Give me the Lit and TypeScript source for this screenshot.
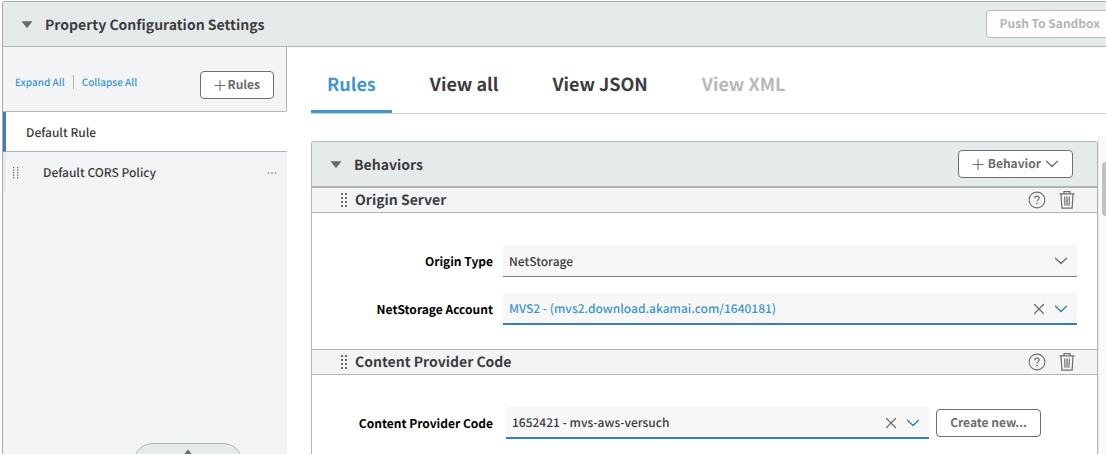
import { LitElement, html, css, svg } from "lit";
import { customElement, property, state } from "lit/decorators.js";
import { classMap } from "lit/directives/class-map.js";

const controls = css`
  * { box-sizing: border-box; }
  button, select {
    font: inherit;
    color: inherit;
    margin: 0;
    text-rendering: inherit;
  }
  .btn {
    display: inline-flex;
    align-items: center;
    justify-content: center;
    height: 28px;
    padding: 0 13px;
    border: 1px solid #6e6e6e;
    border-radius: 4px;
    background: #fff;
    color: #6e6e6e;
    font-size: 12px;
    line-height: 20px;
    font-weight: 700;
    white-space: nowrap;
    flex: none;
    cursor: pointer;
  }
  .btn:disabled { border-color: #b9bcbc; color: #b5b5b5; cursor: default; }
  .icon-btn {
    display: inline-flex;
    padding: 0;
    border: 0;
    background: none;
    color: #6e6e6e;
    cursor: pointer;
  }
  svg { display: block; flex: none; }
`;

const caret = svg`<svg width="12" height="7" viewBox="0 0 12 7" aria-hidden="true"><path d="M0.5 0.3h11L6.6 6.4q-.6.6-1.2 0z" fill="#6a6a6a"/></svg>`;
const plus = svg`<svg width="12" height="12" viewBox="0 0 12 12" aria-hidden="true"><path d="M6 1.500v10M1 6.500h10" stroke="currentColor" stroke-width="1.100" stroke-linecap="round"/></svg>`;
const chevron = svg`<svg width="14" height="10" viewBox="0 0 14 10" aria-hidden="true"><path d="M1.5 2.2 7 7.6l5.500-5.400" fill="none" stroke="currentColor" stroke-width="1.4" stroke-linecap="round" stroke-linejoin="round"/></svg>`;
const cross = svg`<svg width="12" height="12" viewBox="0 0 12 12" aria-hidden="true"><path d="M1.500 1.500l9 9M10.500 1.500l-9 9" stroke="currentColor" stroke-width="1.2" stroke-linecap="round"/></svg>`;
const help = svg`<svg width="18" height="18" viewBox="0 0 18 18" fill="none" stroke="currentColor" aria-hidden="true"><circle cx="9" cy="9" r="7.900" stroke-width="1.100"/><path d="M6.800 7.200c0-1.300.9-2.100 2.200-2.100s2.200.8 2.200 1.900c0 1.600-2.200 1.700-2.200 3.500" stroke-width="1.200"/><circle cx="9" cy="12.500" r=".8" fill="currentColor" stroke="none"/></svg>`;
const trash = svg`<svg width="16" height="20" viewBox="0 0 16 20" fill="none" stroke="currentColor" stroke-width="1.200" aria-hidden="true"><path d="M0.500 3.800h15M5 3.600V1.600h6v2M2 4l.9 14.200h10.200L14 4M5.700 6.500l.3 9.200M8 6.500v9.200M10.300 6.500l-.3 9.200"/></svg>`;

@customElement("drag-handle")
class DragHandle extends LitElement {
  @property({ type: Number }) rows = 4;
  static styles = css`
    :host { display: inline-flex; flex: none; }
    svg { display: block; }
  `;
  render() {
    const small = this.rows > 4;
    const step = small ? 2.5 : 4;
    const size = small ? 1.3 : 2;
    return html`<svg width="6" height=${small ? 12 : 14} aria-hidden="true">
      ${Array.from({ length: this.rows }, (_, i) => svg`
        <rect x="0" y=${i * step} width=${size} height=${size} fill="#6e6e6e"></rect>
        <rect x="4" y=${i * step} width=${size} height=${size} fill="#6e6e6e"></rect>`)}
    </svg>`;
  }
}

@customElement("drop-field")
class DropField extends LitElement {
  @property() label = "";
  @property({ attribute: false }) options: string[] = [];
  @property({ type: Boolean, reflect: true }) active = false;
  @property({ type: Boolean }) linked = false;
  @property() action = "";
  static styles = [controls, css`
    :host { display: flex; align-items: center; gap: 10px; padding-right: 20px; }
    label {
      width: 181px;
      flex: none;
      padding-top: 2px;
      text-align: right;
      font-size: 12px;
      line-height: 20px;
      font-weight: 700;
      color: #000;
    }
    .value { flex: 1; min-width: 0; display: flex; align-items: center; gap: 7px; }
    .with-action { padding: 0 36px 0 3px; }
    .box { position: relative; flex: 1; min-width: 0; }
    select {
      display: block;
      appearance: none;
      width: 100%;
      height: 32px;
      padding: 2px 60px 0 6px;
      border: 0;
      border-bottom: 1px solid #7d7d7d;
      border-radius: 0;
      outline: 0;
      background: #f7f7f7;
      color: #3c3c40;
      font-size: 12px;
      font-weight: 500;
    }
    .active select { border-bottom: 2px solid #3a80b5; }
    .linked select { color: #4295cf; }
    .icons {
      position: absolute;
      inset: 0 9px 0 auto;
      display: flex;
      align-items: center;
      gap: 9px;
      color: #6e6e6e;
      pointer-events: none;
    }
    .icon-btn { pointer-events: auto; }
    .active .chevron { color: #3a80b5; }
  `];
  render() {
    return html`
      <label for="field">${this.label}</label>
      <div class=${classMap({ value: true, "with-action": !!this.action })}>
        <div class=${classMap({ box: true, active: this.active, linked: this.linked })}>
          <select id="field">${this.options.map((o) => html`<option>${o}</option>`)}</select>
          <div class="icons">
            ${this.active ? html`<button class="icon-btn" aria-label="Clear">${cross}</button>` : ""}
            <span class="chevron">${chevron}</span>
          </div>
        </div>
        ${this.action ? html`<button class="btn">${this.action}</button>` : ""}
      </div>`;
  }
}

@customElement("behavior-section")
class BehaviorSection extends LitElement {
  @property() name = "";
  static styles = [controls, css`
    :host { display: block; }
    .bar {
      display: flex;
      align-items: center;
      height: 25px;
      padding: 0 22px 0 29px;
      border-bottom: 1px solid #b1b4b5;
      background: #f3f4f6;
    }
    h3 {
      flex: 1;
      margin: 0 0 0 8px;
      font-size: 14px;
      line-height: 20px;
      font-weight: 700;
      color: #3c3c40;
    }
    .tools { display: flex; align-items: center; gap: 13px; }
    .fields { display: flex; flex-direction: column; gap: 16px; padding: 32px 0 24px; }
  `];
  render() {
    return html`
      <div class="bar">
        <drag-handle></drag-handle>
        <h3>${this.name}</h3>
        <div class="tools">
          <button class="icon-btn" aria-label="Help">${help}</button>
          <button class="icon-btn" aria-label="Delete">${trash}</button>
        </div>
      </div>
      <div class="fields"><slot></slot></div>`;
  }
}

@customElement("app-root")
class AppRoot extends LitElement {
  @state() private tab = "Rules";
  private tabs = ["Rules", "View all", "View JSON", "View XML"];

  static styles = [controls, css`
    :host {
      display: block;
      box-sizing: border-box;
      height: 100vh;
      overflow: hidden;
      padding: 1px 0 0 2px;
      background: #fff;
      color: #3c3c40;
      font-family: "Noto Sans CJK JP", "Noto Sans", sans-serif;
      font-size: 12px;
      line-height: 20px;
      text-rendering: geometricPrecision;
    }
    .frame {
      display: flex;
      flex-direction: column;
      height: 100%;
      overflow: hidden;
      border: solid #a9abac;
      border-width: 1px 0 0 1px;
      border-top-left-radius: 3px;
    }
    .title {
      display: flex;
      align-items: center;
      flex: none;
      height: 45px;
      padding-left: 18px;
      background: #e5ebea;
      border-bottom: 1px solid #b1b4b5;
    }
    h1, h2 {
      flex: 1;
      margin: 0 0 0 12px;
      padding-top: 2px;
      font-size: 14px;
      line-height: 20px;
      font-weight: 700;
    }
    .push { margin-right: -8px; }
    .columns { display: flex; flex: 1; min-height: 0; }
    aside {
      display: flex;
      flex-direction: column;
      flex: none;
      width: 284px;
      background: #f3f4f6;
      overflow: hidden;
    }
    .side-tools {
      display: flex;
      align-items: center;
      flex: none;
      height: 65px;
      padding: 12px 12px 0 12px;
      border: solid #b1b4b5;
      border-width: 0 1px 1px 0;
      border-bottom-right-radius: 2px;
    }
    .side-tools a {
      font-size: 10px;
      line-height: 14px;
      font-weight: 500;
      color: #4295cf;
      text-decoration: none;
    }
    .side-tools a + a { margin-left: 8px; padding-left: 8px; border-left: 1px solid #b1b4b5; }
    .side-tools nav { flex: 1; padding-bottom: 6px; display: flex; }
    .add { gap: 1px; }
    .rule {
      display: flex;
      align-items: center;
      flex: none;
      height: 40px;
      padding: 2px 10px 0 20px;
      border-left: 3px solid #3a80b5;
      border-bottom: 1px solid #b1b4b5;
      background: #fff;
      font-weight: 500;
    }
    .child { padding-left: 7px; border-left-color: #e5ebea; border-bottom: 0; background: none; }
    .child span { flex: 1; margin-left: 24px; }
    .handle {
      flex: none;
      align-self: center;
      width: 110px;
      height: 40px;
      margin: auto 0 -29px 86px;
      padding: 5px 0 0;
      border: 1px solid #b1b4b5;
      border-radius: 20px;
      background: #e5ebea;
      display: flex;
      justify-content: center;
      align-items: flex-start;
    }
    main { flex: 1; min-width: 0; display: flex; flex-direction: column; padding-left: 24px; }
    .tabs {
      display: flex;
      flex: none;
      gap: 22px;
      height: 67px;
      border-bottom: 1px solid #cfcfcf;
    }
    .tab {
      height: 66px;
      padding: 11px 16px 0;
      border: 0;
      border-bottom: 3px solid transparent;
      background: none;
      font-size: 18px;
      line-height: 24px;
      font-weight: 700;
      cursor: pointer;
    }
    .tab.on { color: #4295cf; border-color: #4295cf; }
    .tab:disabled { color: #b9b9b9; }
    .scroller { display: flex; flex: 1; min-height: 0; padding-top: 24px; }
    .panel {
      flex: 1;
      min-width: 0;
      margin-top: 3px;
      overflow: hidden;
      border: 1px solid #b1b4b5;
      border-bottom: 0;
      border-radius: 3px 3px 0 0;
    }
    .panel-head {
      display: flex;
      align-items: center;
      height: 46px;
      padding: 0 24px 0 18px;
      background: #e5ebea;
      border-bottom: 2px solid #b1b4b5;
    }
    .more { gap: 4px; }
    behavior-section + behavior-section { border-top: 1px solid #b1b4b5; }
    .track {
      flex: none;
      width: 8px;
      padding: 24px 0 0 3px;
      background: #fafafa;
      border-left: 1px solid #ececec;
    }
    .thumb { height: 54px; border-radius: 4px 0 0 4px; background: #c1c1c1; }
  `];

  render() {
    return html`
      <div class="frame">
        <header class="title">
          ${caret}
          <h1>Property Configuration Settings</h1>
          <button class="btn push" disabled>Push To Sandbox</button>
        </header>
        <div class="columns">
          <aside>
            <div class="side-tools">
              <nav><a href="#expand">Expand All</a><a href="#collapse">Collapse All</a></nav>
              <button class="btn add">${plus}Rules</button>
            </div>
            <div class="rule">Default Rule</div>
            <div class="rule child">
              <drag-handle .rows=${5}></drag-handle>
              <span>Default CORS Policy</span>
              <button class="icon-btn" aria-label="Rule menu">
                <svg width="10" height="4" viewBox="0 0 10 4"><circle cx="1.500" cy="2" r=".8" fill="#6e6e6e"/><circle cx="5" cy="2" r=".8" fill="#6e6e6e"/><circle cx="8.500" cy="2" r=".8" fill="#6e6e6e"/></svg>
              </button>
            </div>
            <button class="handle" aria-label="Expand panel">
              <svg width="10" height="7" viewBox="0 0 10 7"><path d="M0.500 6.500 4.400 1q.6-.7 1.200 0l3.900 5.500z" fill="#6a6a6a"/></svg>
            </button>
          </aside>
          <main>
            <div class="tabs" role="tablist">
              ${this.tabs.map((t) => html`<button
                role="tab"
                class=${classMap({ tab: true, on: t === this.tab })}
                aria-selected=${t === this.tab}
                ?disabled=${t === "View XML"}
                @click=${() => (this.tab = t)}>${t}</button>`)}
            </div>
            <div class="scroller">
              <section class="panel">
                <div class="panel-head">
                  ${caret}
                  <h2>Behaviors</h2>
                  <button class="btn add more">${plus}Behavior${chevron}</button>
                </div>
                <behavior-section name="Origin Server">
                  <drop-field label="Origin Type" .options=${["NetStorage"]}></drop-field>
                  <drop-field label="NetStorage Account" active linked
                    .options=${["MVS2 - (mvs2.download.akamai.com/1640181)"]}></drop-field>
                </behavior-section>
                <behavior-section name="Content Provider Code">
                  <drop-field label="Content Provider Code" active action="Create new..."
                    .options=${["1652421 - mvs-aws-versuch"]}></drop-field>
                </behavior-section>
              </section>
              <div class="track"><div class="thumb"></div></div>
            </div>
          </main>
        </div>
      </div>`;
  }
}
